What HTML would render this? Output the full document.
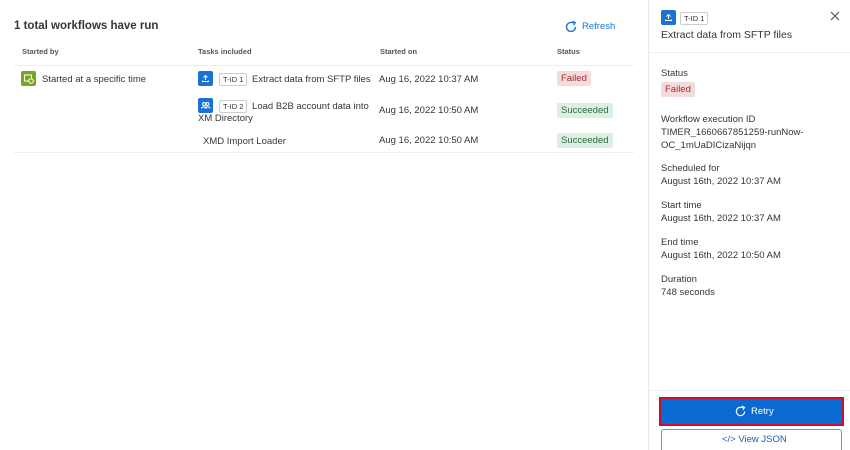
<!DOCTYPE html>
<html><head><style>
*{margin:0;padding:0;box-sizing:border-box}
html,body{width:850px;height:450px;overflow:hidden}
body{background:#fff;font-family:"Liberation Sans",sans-serif;color:#32363a;position:relative;font-size:9.5px}
.a{position:absolute;white-space:nowrap}
.h{font-size:11.5px;font-weight:bold}
.th{font-size:7.5px;color:#555;font-weight:bold}
.t{font-size:9.5px}
.tid{display:inline-block;border:1px solid #ccc;border-radius:2px;font-size:7.5px;padding:1px 3px;color:#333;margin-right:2px}
.ic{position:absolute;width:15px;height:15px;border-radius:2px;background:#1a73d4}
.badge{position:absolute;font-size:9.5px;padding:2px 4px;border-radius:2px}
.f{background:#f3dcdd;color:#b3262d}
.s{background:#dcefe2;color:#2a6b3c}
</style></head><body>
<div class="a h" style="left:14px;top:20px">1 total workflows have run</div>
<svg class="a" style="left:564px;top:20px" width="14" height="14" viewBox="0 0 14 14"><path d="M11.5 7A4.5 4.5 0 1 1 9.5 3.2" fill="none" stroke="#1a73d4" stroke-width="1.4"/><path d="M8.5 1.2L11.2 2.6 9.8 5.2" fill="none" stroke="#1a73d4" stroke-width="1.4"/></svg>
<div class="a" style="left:582px;top:21px;color:#1a73d4;font-size:9.5px">Refresh</div>
<div class="a th" style="left:22px;top:47px">Started by</div>
<div class="a th" style="left:198px;top:47px">Tasks included</div>
<div class="a th" style="left:380px;top:47px">Started on</div>
<div class="a th" style="left:557px;top:47px">Status</div>
<div class="a" style="left:14px;top:65px;width:620px;height:1px;background:#eee"></div>
<div class="a" style="left:14px;top:152px;width:620px;height:1px;background:#eee"></div>
<div class="ic" style="left:21px;top:71px;background:#7aa520"><svg width="15" height="15" viewBox="0 0 15 15"><rect x="3.5" y="4" width="7" height="6" fill="none" stroke="#fff"/><circle cx="10" cy="10" r="2.3" fill="#7aa520" stroke="#fff"/></svg></div>
<div class="a t" style="left:42px;top:74px">Started at a specific time</div>
<div class="ic" style="left:198px;top:71px"><svg width="15" height="15" viewBox="0 0 15 15"><path d="M7.5 9V4.5M5.5 6.5l2-2 2 2M4.5 9.5v1h6v-1" fill="none" stroke="#fff"/></svg></div>
<div class="a t" style="left:219px;top:73px"><span class="tid">T-ID 1</span> Extract data from SFTP files</div>
<div class="ic" style="left:198px;top:98px"><svg width="15" height="15" viewBox="0 0 15 15"><circle cx="6" cy="6" r="1.5" fill="none" stroke="#fff"/><circle cx="9.5" cy="6" r="1.5" fill="none" stroke="#fff"/><path d="M3.5 10.5c0-2 5-2 5 0M7 10.5c0-2 5-2 5 0" fill="none" stroke="#fff"/></svg></div>
<div class="a t" style="left:219px;top:100px"><span class="tid">T-ID 2</span> Load B2B account data into</div>
<div class="a t" style="left:198px;top:113px">XM Directory</div>
<div class="a t" style="left:203px;top:136px">XMD Import Loader</div>
<div class="a t" style="left:379px;top:74px">Aug 16, 2022 10:37 AM</div>
<div class="a t" style="left:379px;top:105px">Aug 16, 2022 10:50 AM</div>
<div class="a t" style="left:379px;top:135px">Aug 16, 2022 10:50 AM</div>
<div class="badge f" style="left:557px;top:71px">Failed</div>
<div class="badge s" style="left:557px;top:103px">Succeeded</div>
<div class="badge s" style="left:557px;top:133px">Succeeded</div>

<div class="a" style="left:648px;top:0;width:1px;height:450px;background:#e8e8e8"></div>
<div class="ic" style="left:661px;top:10px"><svg width="15" height="15" viewBox="0 0 15 15"><path d="M7.5 9V4.5M5.5 6.5l2-2 2 2M4.5 9.5v1h6v-1" fill="none" stroke="#fff"/></svg></div>
<div class="a" style="left:680px;top:12px"><span class="tid">T-ID 1</span></div>
<svg class="a" style="left:830px;top:11px" width="10" height="10"><path d="M1 1L9 9M9 1L1 9" stroke="#555" stroke-width="1.2"/></svg>
<div class="a" style="left:661px;top:29px;font-size:10.5px">Extract data from SFTP files</div>
<div class="a" style="left:649px;top:52px;width:201px;height:1px;background:#eee"></div>
<div class="a t" style="left:661px;top:68px">Status</div>
<div class="badge f" style="left:661px;top:82px">Failed</div>
<div class="a t" style="left:661px;top:113px;line-height:13px">Workflow execution ID<br>TIMER_1660667851259-runNow-<br>OC_1mUaDICizaNijqn</div>
<div class="a t" style="left:661px;top:163px;line-height:12.5px">Scheduled for<br>August 16th, 2022 10:37 AM</div>
<div class="a t" style="left:661px;top:200px;line-height:12.5px">Start time<br>August 16th, 2022 10:37 AM</div>
<div class="a t" style="left:661px;top:237px;line-height:12.5px">End time<br>August 16th, 2022 10:50 AM</div>
<div class="a t" style="left:661px;top:274px;line-height:12.5px">Duration<br>748 seconds</div>
<div class="a" style="left:649px;top:390px;width:201px;height:1px;background:#eee"></div>
<div class="a" style="left:659px;top:397px;width:185px;height:29px;border:2px solid #c8102e;background:#0b6ad1"></div>
<svg class="a" style="left:734px;top:405px" width="13" height="13" viewBox="0 0 14 14"><path d="M11.5 7A4.5 4.5 0 1 1 9.5 3.2" fill="none" stroke="#fff" stroke-width="1.3"/><path d="M8.5 1.2L11.2 2.6 9.8 5.2" fill="none" stroke="#fff" stroke-width="1.3"/></svg>
<div class="a" style="left:751px;top:406px;color:#fff;font-size:9.5px">Retry</div>
<div class="a" style="left:661px;top:429px;width:181px;height:30px;border:1px solid #5a9be0;border-radius:3px"></div>
<div class="a" style="left:722px;top:434px;color:#1a5fb4;font-size:9.5px">&lt;/&gt; View JSON</div>
</body></html>
